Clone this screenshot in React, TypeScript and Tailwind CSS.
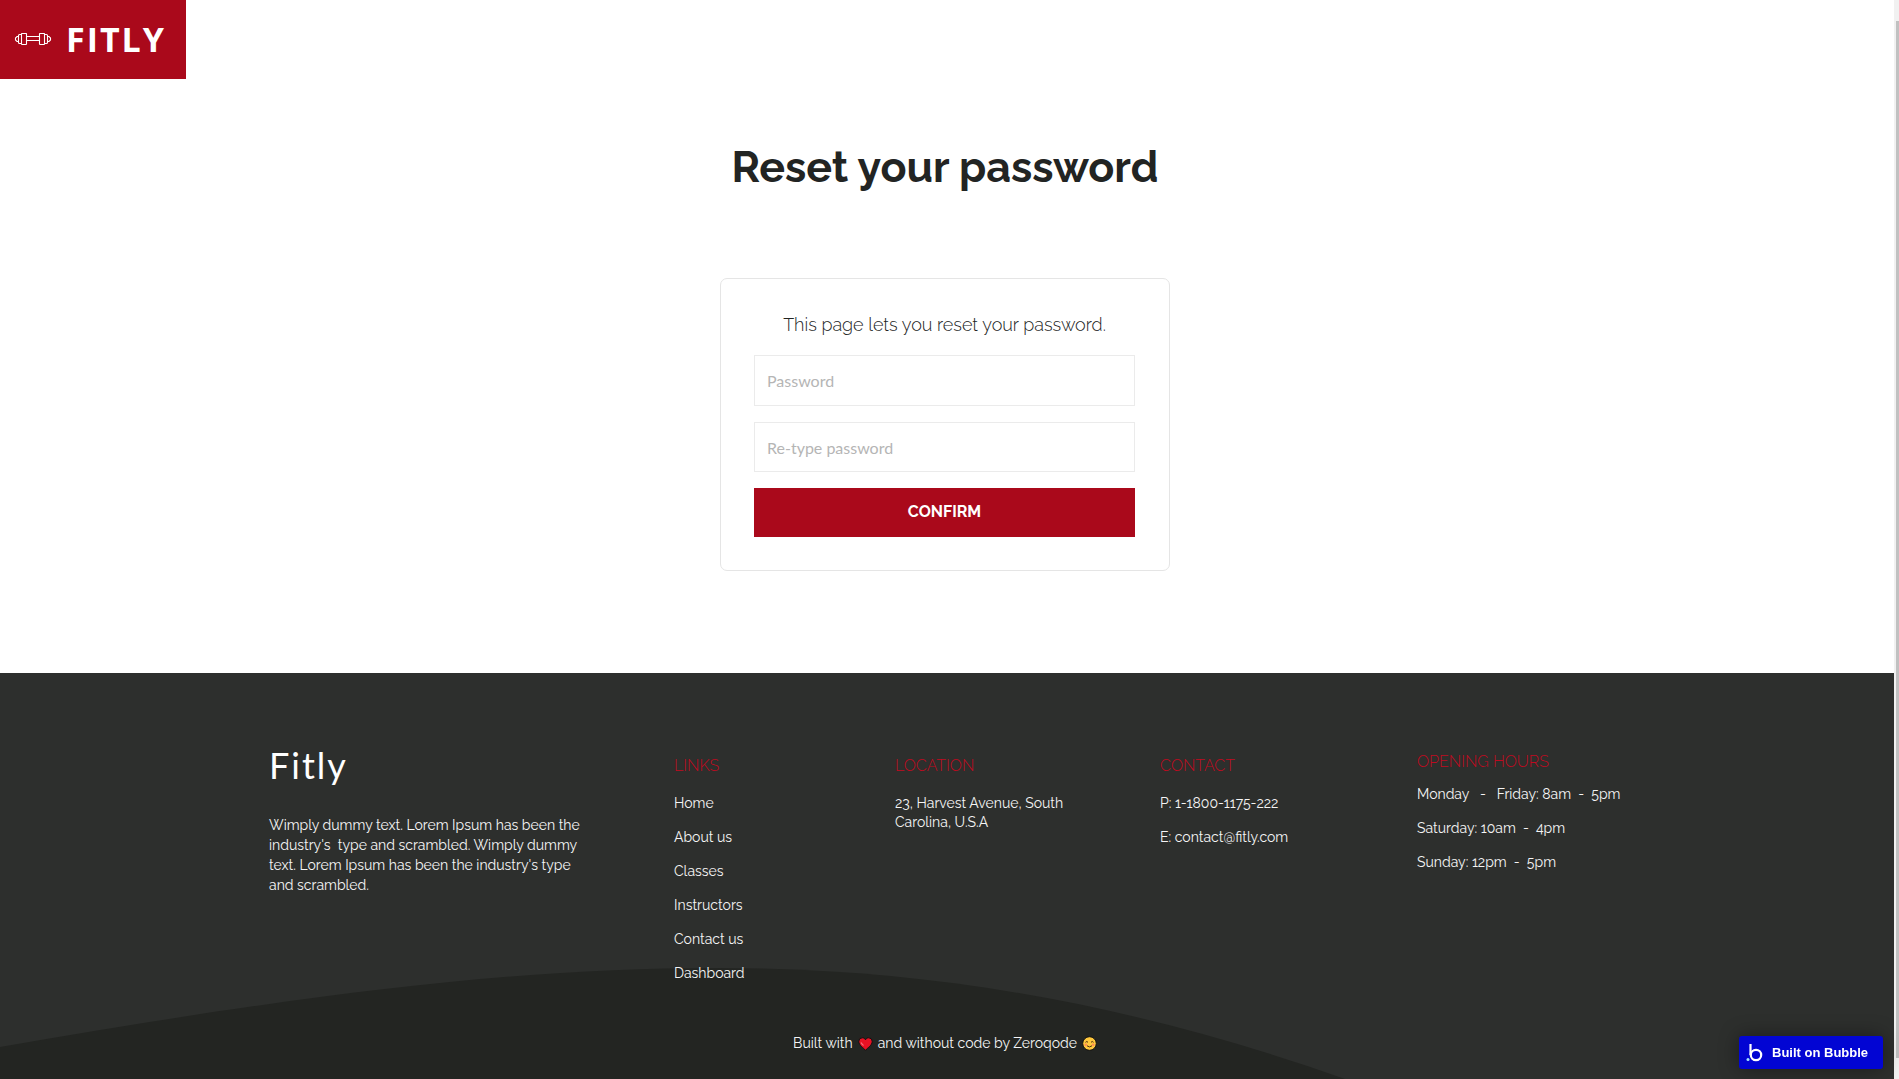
import type { ReactNode } from 'react';

interface FooterColumnProps {
    title: string;
    className?: string;
    children: ReactNode;
}

const links = ['Home', 'About us', 'Classes', 'Instructors', 'Contact us', 'Dashboard'];

const openingHours = [
    'Monday\u00a0\u00a0 -\u00a0\u00a0 Friday: 8am\u00a0 -\u00a0 5pm',
    'Saturday: 10am\u00a0 -\u00a0 4pm',
    'Sunday: 12pm\u00a0 -\u00a0 5pm',
];

const DumbbellIcon = () => (
    <svg width="38" height="14" viewBox="0 1 38 14" fill="none" stroke="#fff" strokeWidth="1.1" aria-hidden="true">
        <rect x="7.5" y="1.5" width="5" height="11" rx="0.6" />
        <rect x="25.5" y="1.5" width="5" height="11" rx="0.6" />
        <path d="M12.5 4.5h13M12.5 8.5h13M7.5 2.5h-2a1 1 0 0 0-1 1v7a1 1 0 0 0 1 1h2M30.5 2.5h2a1 1 0 0 1 1 1v7a1 1 0 0 1-1 1h-2" />
        <path d="M4.5 4.5H3L1.5 6v2L3 9.5h1.5M33.5 4.5H35L36.5 6v2L35 9.5h-1.5" />
    </svg>
);

const HeartIcon = () => (
    <svg className="mx-[5px] inline-block align-[-3px]" width="15" height="14" viewBox="0 0 15 14" role="img" aria-label="love">
        <path
            d="M7.5 13.3C5.5 10.8.8 8.4.8 4.5A3.6 3.6 0 0 1 4.3.8C5.7.8 6.9 1.5 7.5 2.8 8.1 1.5 9.3.8 10.7.8a3.6 3.6 0 0 1 3.5 3.7c0 3.9-4.7 6.3-6.7 8.8Z"
            fill="#e81224"
            stroke="#111"
            strokeWidth="1"
        />
        <path d="M3 5.5c.6 1.3 1.4 2 2.5 3" stroke="#f4707c" strokeWidth="1.2" fill="none" />
    </svg>
);

const SmileIcon = () => (
    <svg className="ml-[5px] inline-block align-[-3px]" width="15" height="15" viewBox="0 0 15 15" role="img" aria-label="smile">
        <circle cx="7.5" cy="7.5" r="6.8" fill="#ffc83d" stroke="#111" strokeWidth="1" />
        <circle cx="3.8" cy="8.8" r="1.3" fill="#ff8d55" />
        <circle cx="11.2" cy="8.8" r="1.3" fill="#ff8d55" />
        <path d="M3.5 6.3q1.3-1.6 2.5 0M9 6.3q1.3-1.6 2.5 0M5 9.8q2.5 2.2 5 0" fill="none" stroke="#4a2d12" strokeWidth="1" />
    </svg>
);

const FooterColumn = ( { title, className = '', children }: FooterColumnProps ) => (
    <div className={className}>
        <h3 className="text-base leading-5 font-light text-[#c00a20]">{title}</h3>
        {children}
    </div>
);

const Header = () => (
    <header className="flex h-[79px]">
        <a href="#" className="flex w-[186px] items-center gap-[14px] bg-[#aa091b] pl-[14px] text-white">
            <DumbbellIcon />
            <span className="pb-0.5 font-['Open_Sans',sans-serif] text-[34px] leading-10 font-bold tracking-[2px]">FITLY</span>
        </a>
    </header>
);

const ResetForm = () => (
    <main className="flex flex-col items-center pt-[60px] pr-1 pb-[102px]">
        <h1 className="text-[43px] leading-[56px] font-bold text-[#222423]">Reset your password</h1>
        <form
            onSubmit={( e ) => e.preventDefault()}
            className="mt-[83px] flex w-[450px] flex-col gap-4 rounded-[7px] border border-[#e5e5e5] pt-[34px] pr-[34px] pb-[33px] pl-[33px]"
        >
            <p className="pb-0.5 text-center text-lg leading-6 font-light whitespace-nowrap text-[#222423]">
                This page lets you reset your password.
            </p>
            <input
                type="password"
                aria-label="Password"
                placeholder="Password"
                className="h-[51px] border border-[#ebebeb] px-3 font-[Lato,sans-serif] text-base text-gray-800 placeholder:text-[#b5b5b5]"
            />
            <input
                type="password"
                aria-label="Re-type password"
                placeholder="Re-type password"
                className="h-[50px] border border-[#ebebeb] px-3 font-[Lato,sans-serif] text-base text-gray-800 placeholder:text-[#b5b5b5]"
            />
            <button type="submit" className="h-[49px] bg-[#aa091b] pb-0.5 text-base font-bold text-white">
                CONFIRM
            </button>
        </form>
    </main>
);

const Footer = () => (
    <footer className="relative flex-1 bg-[#2d2f2d] text-sm leading-[19px] text-[#f5f5f5]">
        <svg
            className="absolute inset-x-0 bottom-0 h-[111px] w-full"
            viewBox="0 0 1894 111"
            preserveAspectRatio="none"
            aria-hidden="true"
        >
            <path d="M0 79C300 27 510 0 715 0C930 0 1130 35 1345 111H0Z" fill="#232522" />
        </svg>

        <div className="relative mx-auto grid max-w-[1356px] grid-cols-[405fr_221fr_265fr_257fr_208fr] pt-[70px]">
            <div>
                <h2 className="font-[Lato,sans-serif] text-4xl leading-[44px] tracking-[2px] text-white">Fitly</h2>
                <p className="mt-7 leading-5 whitespace-pre">
                    {'Wimply dummy text. Lorem Ipsum has been the\nindustry\'s\u00a0 type and scrambled. Wimply dummy\ntext. Lorem Ipsum has been the industry\'s type\nand scrambled.'}
                </p>
            </div>

            <FooterColumn title="LINKS" className="pt-[13px]">
                <ul className="mt-[18px] flex flex-col gap-[15px]">
                    {links.map( ( link ) => (
                        <li key={link}>
                            <a href="#">{link}</a>
                        </li>
                    ) )}
                </ul>
            </FooterColumn>

            <FooterColumn title="LOCATION" className="pt-[13px]">
                <p className="mt-[18px]">
                    23, Harvest Avenue, South
                    <br />
                    Carolina, U.S.A
                </p>
            </FooterColumn>

            <FooterColumn title="CONTACT" className="pt-[13px]">
                <div className="mt-[18px] flex flex-col gap-[15px]">
                    <p>P: 1-1800-1175-222</p>
                    <p>E: contact@fitly.com</p>
                </div>
            </FooterColumn>

            <FooterColumn title="OPENING HOURS" className="pt-[9px]">
                <div className="mt-[13px] flex flex-col gap-[15px] whitespace-nowrap">
                    {openingHours.map( ( line ) => (
                        <p key={line}>{line}</p>
                    ) )}
                </div>
            </FooterColumn>
        </div>

        <p className="relative mt-[51px] pr-1 pb-6 text-center">
            Built with
            <HeartIcon />
            and without code by Zeroqode
            <SmileIcon />
        </p>
    </footer>
);

const BubbleBadge = () => (
    <a
        href="#"
        className="fixed right-4 bottom-[10px] flex h-[33px] w-[144px] items-center gap-[9px] rounded-[3px] bg-[#0205d3] pl-[7px] font-['Liberation_Sans',sans-serif] text-[13px] font-bold whitespace-nowrap text-white shadow-[0_0_20px_rgba(0,0,0,0.4)]"
    >
        <svg width="17" height="19" viewBox="0 0 17 19" fill="none" aria-hidden="true">
            <path d="M4.5 1v11" stroke="#fff" strokeWidth="2.2" />
            <circle cx="10" cy="12" r="5.2" stroke="#fff" strokeWidth="2.2" />
            <circle cx="2" cy="16.5" r="1.5" fill="#a5e8ff" />
        </svg>
        Built on Bubble
    </a>
);

export default function App() {
    return (
        <div className="flex min-h-screen bg-white font-[Raleway,Lato,sans-serif]">
            <div className="flex min-w-0 flex-1 flex-col">
                <Header />
                <ResetForm />
                <Footer />
            </div>
            <div className="flex w-[5px] justify-end bg-[#f1f1f1] py-[21px]" aria-hidden="true">
                <div className="w-[3px] bg-[#c1c1c1]" />
            </div>
            <BubbleBadge />
        </div>
    );
}
